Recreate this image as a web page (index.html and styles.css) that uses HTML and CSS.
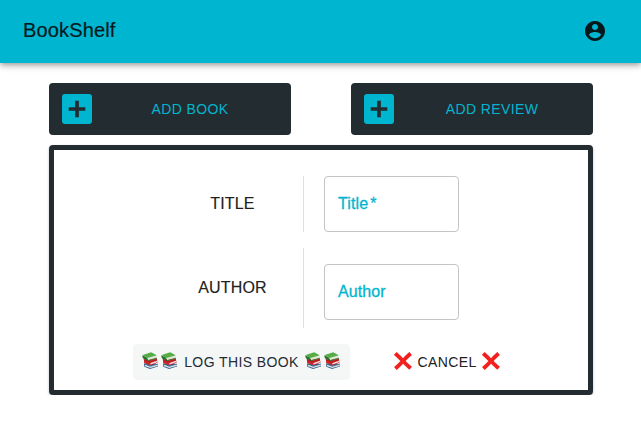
FILE: index.html
```html
<!DOCTYPE html>
<html lang="en">
<head>
<meta charset="utf-8">
<title>BookShelf</title>
<link rel="stylesheet" href="styles.css">
</head>
<body>
<svg class="defs" aria-hidden="true">
  <symbol id="books" viewBox="0 0 17 17">
    <path d="M2 11.8 9 10.5 16 12.5v2L8 17 2.3 14.7z" fill="#3b5f85"/>
    <path d="M3 12.3 8.2 14 15.8 12v1.9L8.3 16 3 14.3z" fill="#dce5e8"/>
    <path d="M2.2 11.8 8.2 14.3 16 12" fill="none" stroke="#315d8d" stroke-width=".8"/>
    <path d="M1.8 7.3 14.7 6.2l.8 4.6-7 2.5L2.2 11z" fill="#cf2428"/>
    <path d="M8.3 11 15 8.7v1.5l-6.5 2.3z" fill="#f1dddd"/>
    <path d="M1.8 7.6 8.2 10 15 7.6" fill="none" stroke="#9d171c" stroke-width=".8"/>
    <path d="M.5 3.2 5.3 5.8 6 8.9 1.2 6.6Q0 4.9.5 3.2z" fill="#28732c"/>
    <path d="M5.5 5.6 14.2 3.4l.3 2.7L6.2 8.3z" fill="#dfe5d6"/>
    <path d="M.6 3 9.2.2 14.8 3.2 5.4 6z" fill="#55ad46"/>
    <path d="M6 8.6 15 6.2" stroke="#347b32" stroke-width=".9"/>
  </symbol>
  <symbol id="cross" viewBox="0 0 18 18">
    <path d="M2.7 2.8Q6 5.8 9 9t6.2 6M15.2 2.8Q12 5.6 9 9t-6.2 6.2" fill="none" stroke="#f2211f" stroke-width="3.9" stroke-linecap="square"/>
  </symbol>
  <symbol id="plus" viewBox="0 0 30 30">
    <rect width="30" height="30" rx="3" fill="#00b5cf"/>
    <path d="M15 6.7v16.6M6.7 15h16.6" stroke="#232c31" stroke-width="3.7"/>
  </symbol>
</svg>
<header class="bar">
  <h1 class="brand">BookShelf</h1>
  <svg class="account" viewBox="2 2 20 20"><path d="M12 2C6.48 2 2 6.48 2 12s4.48 10 10 10 10-4.48 10-10S17.52 2 12 2zm0 3c1.66 0 3 1.34 3 3s-1.34 3-3 3-3-1.34-3-3 1.34-3 3-3zm0 14.2c-2.5 0-4.71-1.28-6-3.22.03-1.99 4-3.08 6-3.08 1.99 0 5.97 1.09 6 3.08-1.29 1.94-3.5 3.22-6 3.22z"/></svg>
</header>
<main class="content">
  <div class="actions">
    <button class="add"><svg class="plus"><use href="#plus"/></svg><span class="add-label">ADD BOOK</span></button>
    <button class="add"><svg class="plus"><use href="#plus"/></svg><span class="add-label">ADD REVIEW</span></button>
  </div>
  <section class="panel">
    <div class="row row-title"><div class="label">TITLE</div><div class="field">Title<span class="required">*</span></div></div>
    <div class="row row-author"><div class="label">AUTHOR</div><div class="field">Author</div></div>
    <div class="footer">
      <button class="log"><span class="books"><svg class="book"><use href="#books"/></svg><svg class="book"><use href="#books"/></svg></span><span>LOG THIS BOOK</span><span class="books"><svg class="book"><use href="#books"/></svg><svg class="book"><use href="#books"/></svg></span></button>
      <button class="cancel"><svg class="cross"><use href="#cross"/></svg><span class="cancel-text">CANCEL</span><svg class="cross"><use href="#cross"/></svg></button>
    </div>
  </section>
</main>
</body>
</html>
```
FILE: styles.css
```css
* { box-sizing: border-box; }
body { margin: 0; background: #fff; color: #212121; font-family: "Liberation Sans", Arial, sans-serif; }
button { font: inherit; border: 0; margin: 0; }
svg { display: block; flex: none; }
.defs { position: absolute; width: 0; height: 0; }
.bar { height: 63px; padding: 0 36px 2px 23px; display: flex; align-items: center; justify-content: space-between; background: #00b5cf; color: #05191d; box-shadow: 0 2px 4px -1px rgba(0,0,0,.2), 0 4px 5px rgba(0,0,0,.14), 0 1px 10px rgba(0,0,0,.12); }
.brand { margin: 0; font-size: 20px; font-weight: 400; letter-spacing: .15px; -webkit-text-stroke: .2px; }
.account { width: 20px; height: 20px; fill: #05191d; }
.content { padding: 20px 48px 0 49px; }
.actions { display: grid; grid-template-columns: 242px 242px; gap: 60px; }
.add { height: 52px; padding: 0 0 0 13px; display: flex; align-items: center; border-radius: 4px; background: #232c31; color: #00b5cf; font-size: 14px; letter-spacing: .4px; }
.plus { width: 30px; height: 30px; }
.add-label { flex: 1; text-align: center; padding-right: 3px; }
.panel { height: 250px; margin-top: 10px; padding-top: 26px; border: 5px solid #232c31; border-radius: 4px; box-shadow: 0 1px 3px rgba(0,0,0,.2), 0 1px 1px rgba(0,0,0,.14); }
.row { width: 318px; margin: 0 auto 16px; display: grid; grid-template-columns: 142px 135px; column-gap: 20px; }
.label { display: flex; align-items: center; justify-content: center; border-right: 1px solid #e0e0e0; font-size: 16px; letter-spacing: .15px; -webkit-text-stroke: .15px; }
.row-title { height: 56px; }
.row-author { height: 80px; }
.field { height: 56px; align-self: center; padding-left: 13px; display: flex; align-items: center; border: 1px solid #c4c4c4; border-radius: 4px; color: #00b5cf; font-size: 16px; letter-spacing: .1px; -webkit-text-stroke: .3px; }
.row-author .field { margin-top: 8px; }
.row-author .label { padding-bottom: 1px; }
.required { margin-left: 2px; }
.footer { display: flex; gap: 37px; margin-left: 79px; }
.log, .cancel { height: 36px; display: flex; align-items: center; border-radius: 4px; font-size: 14px; letter-spacing: .4px; white-space: nowrap; }
.log { width: 217px; padding: 0 9px; justify-content: space-between; background: #f5f7f7; color: #232c31; }
.books { display: flex; gap: 2px; margin-bottom: 3px; }
.book { width: 17px; height: 17px; }
.cancel { width: 124px; padding: 0 8px 0 7px; background: transparent; color: #212121; }
.cross { width: 18px; height: 18px; margin-bottom: 2px; }
.cancel-text { width: 60px; margin: 0 5px; }
```
